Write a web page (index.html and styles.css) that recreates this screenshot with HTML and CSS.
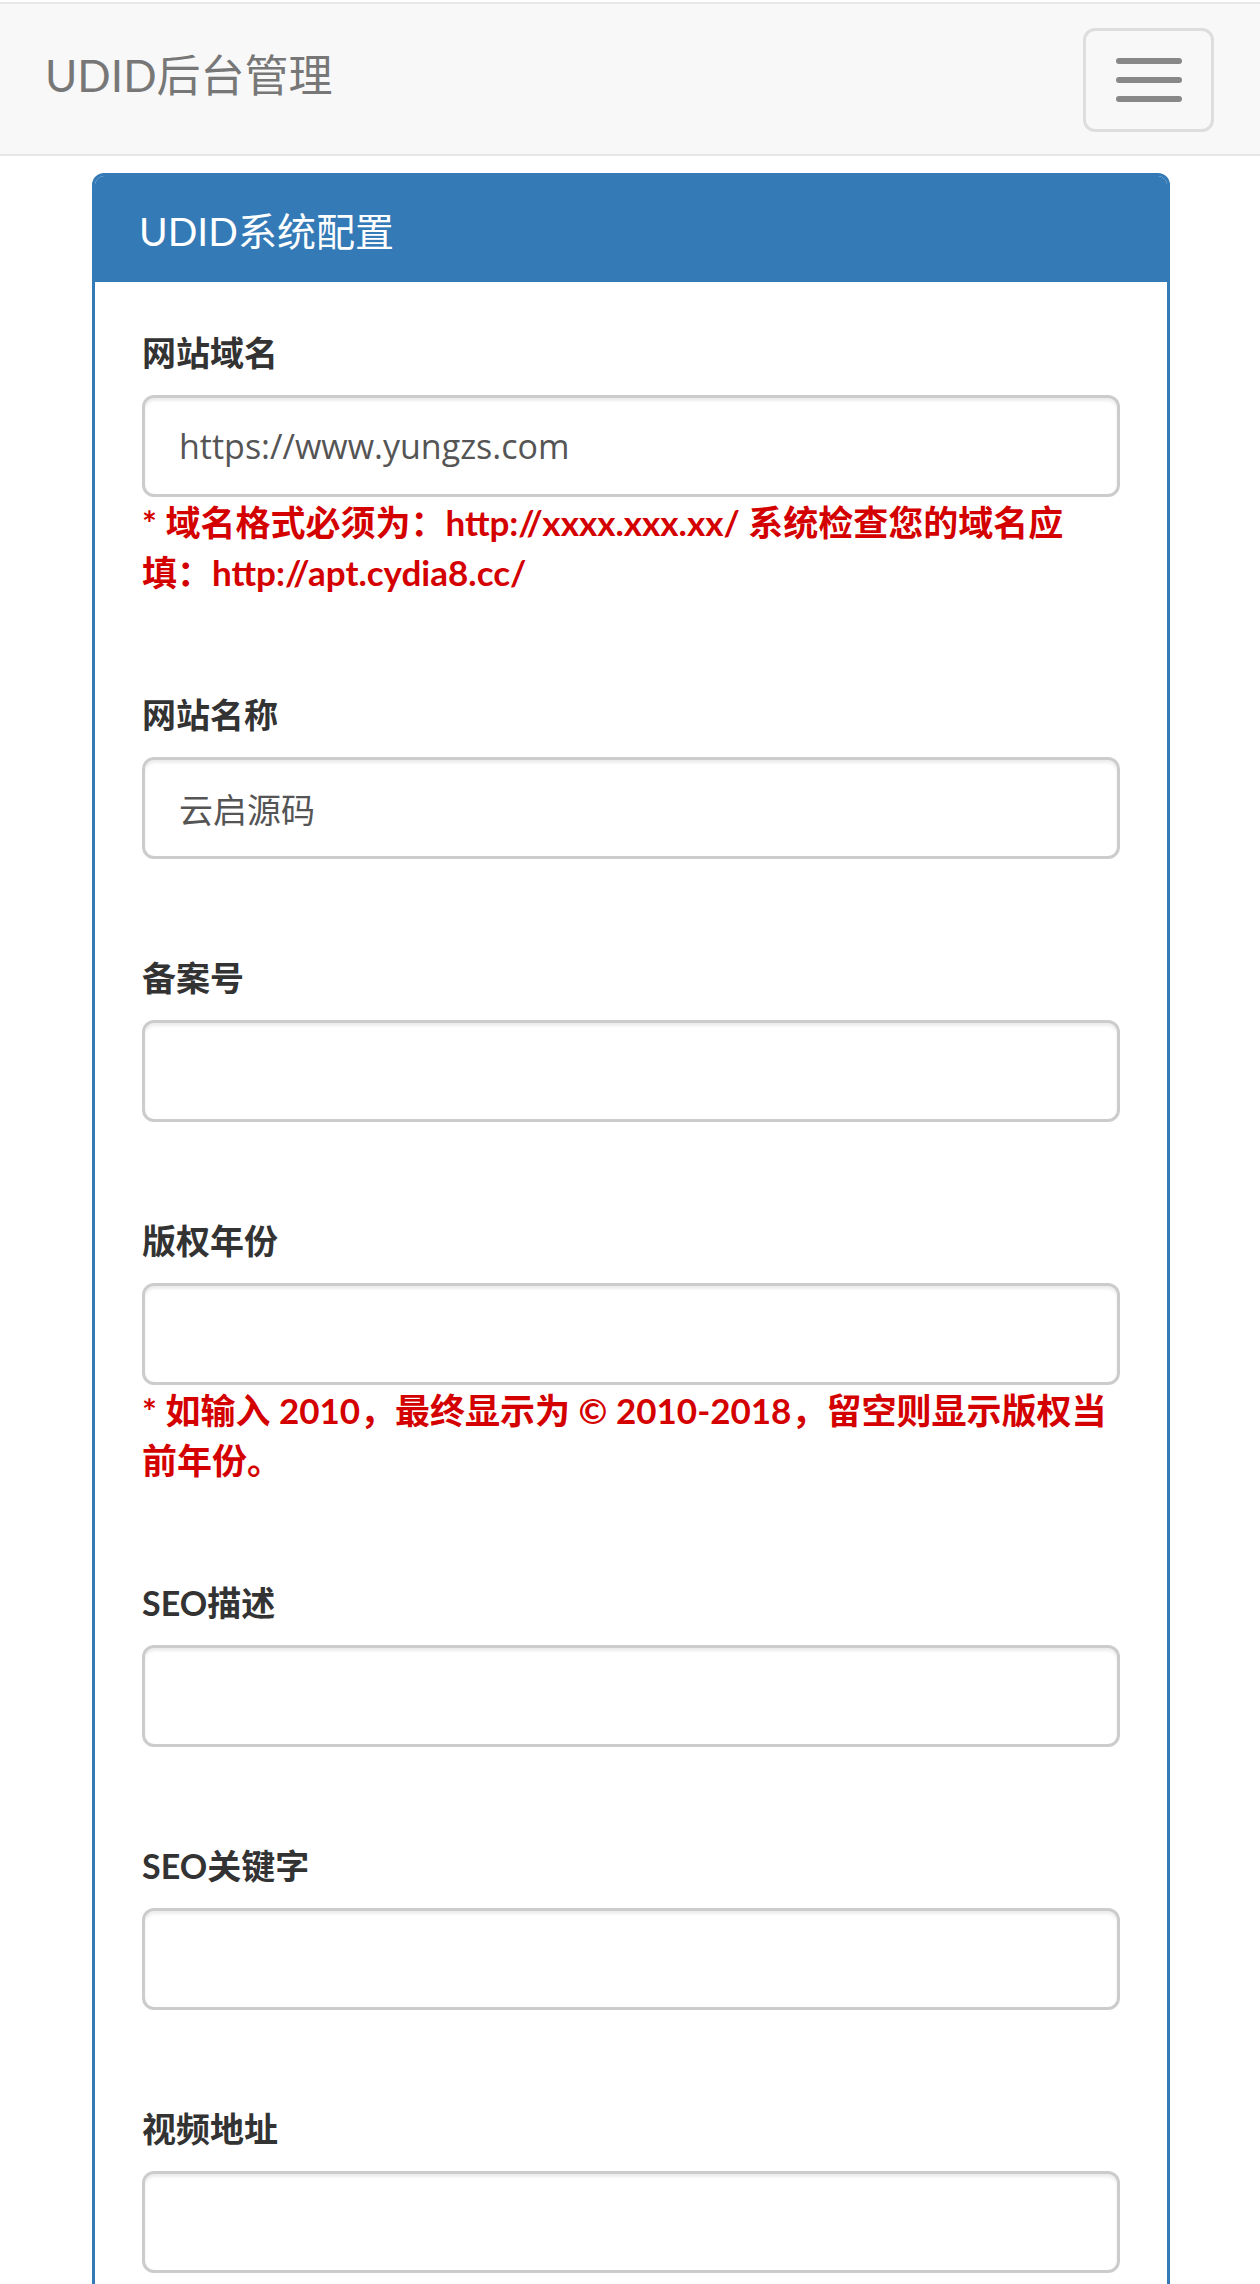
FILE: index.html
```html
<!DOCTYPE html>
<html lang="zh-CN">
<head>
<meta charset="utf-8">
<title>UDID后台管理</title>
<link rel="stylesheet" href="styles.css">
</head>
<body>
<nav class="navbar">
  <div class="brand">UDID后台管理</div>
  <button class="toggle" type="button" aria-label="菜单">
    <span class="bar"></span>
    <span class="bar"></span>
    <span class="bar"></span>
  </button>
</nav>
<div class="panel">
  <div class="panel-heading">UDID系统配置</div>
  <div class="panel-body">
    <div class="form-group">
      <label class="label">网站域名</label>
      <input class="input" type="text" value="https://www.yungzs.com">
      <p class="help">* 域名格式必须为：http://xxxx.xxx.xx/ 系统检查您的域名应填：http://apt.cydia8.cc/</p>
    </div>
    <div class="form-group">
      <label class="label">网站名称</label>
      <input class="input" type="text" value="云启源码">
    </div>
    <div class="form-group">
      <label class="label">备案号</label>
      <input class="input" type="text" value="">
    </div>
    <div class="form-group">
      <label class="label">版权年份</label>
      <input class="input" type="text" value="">
      <p class="help">* 如输入 2010，最终显示为 © 2010-2018，留空则显示版权当前年份。</p>
    </div>
    <div class="form-group">
      <label class="label">SEO描述</label>
      <input class="input" type="text" value="">
    </div>
    <div class="form-group">
      <label class="label">SEO关键字</label>
      <input class="input" type="text" value="">
    </div>
    <div class="form-group">
      <label class="label">视频地址</label>
      <input class="input" type="text" value="">
    </div>
  </div>
</div>
</body>
</html>
```
FILE: styles.css
```css
html, body {
  margin: 0;
  padding: 0;
  background: #fff;
}
body {
  font-family: Lato, "Noto Sans CJK SC", sans-serif;
  color: #333;
}
.navbar {
  margin-top: 2px;
  height: 150px;
  background: #f8f8f8;
  border-top: 2px solid #e7e7e7;
  border-bottom: 2px solid #e7e7e7;
  display: flex;
  align-items: center;
  justify-content: space-between;
  padding: 0 46px 0 45px;
}
.brand {
  font-size: 44px;
  color: #777;
  margin-bottom: 12px;
}
.toggle {
  box-sizing: border-box;
  width: 131px;
  height: 104px;
  margin-top: 2px;
  background: transparent;
  border: 3px solid #ddd;
  border-radius: 12px;
  display: flex;
  flex-direction: column;
  align-items: center;
  justify-content: center;
  gap: 13px;
  padding: 0;
}
.bar {
  display: block;
  width: 66px;
  height: 6px;
  background: #888;
  border-radius: 3px;
}
.panel {
  margin: 17px 90px 0 92px;
  border: 3px solid #337ab7;
  border-radius: 12px;
  background: #fff;
}
.panel-heading {
  height: 106px;
  background: #337ab7;
  color: #fff;
  font-size: 39px;
  display: flex;
  align-items: center;
  padding: 0 44px;
  border-radius: 9px 9px 0 0;
}
.panel-body {
  padding: 46px 47px;
}
.form-group {
  margin-bottom: 94px;
}
.label {
  display: block;
  font-size: 34px;
  font-weight: bold;
  line-height: 50px;
  margin-bottom: 17px;
  color: #333;
}
.input {
  display: block;
  box-sizing: border-box;
  width: 100%;
  height: 102px;
  border: 3px solid #ccc;
  border-radius: 12px;
  box-shadow: inset 0 3px 3px rgba(0, 0, 0, 0.075);
  font-family: "Open Sans", "Noto Sans CJK SC", sans-serif;
  font-size: 34px;
  color: #555;
  padding: 0 34px;
  margin: 0;
  background: #fff;
  outline: none;
}
.help {
  margin: 0 0 -1px 0;
  font-size: 35px;
  line-height: 50px;
  font-weight: bold;
  color: #d40000;
}
```
